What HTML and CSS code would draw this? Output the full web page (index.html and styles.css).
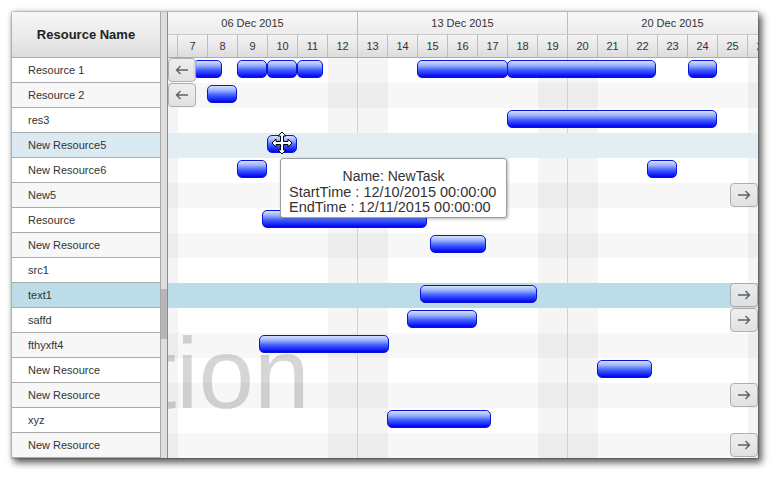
FILE: index.html
```html
<!DOCTYPE html>
<html>
<head>
<meta charset="utf-8">
<link rel="stylesheet" href="styles.css">
</head>
<body>
<div class="window">
  <div class="left">
    <div class="left-head">Resource Name</div>
    <div class="list">
      <div class="lrow">Resource 1</div>
      <div class="lrow alt">Resource 2</div>
      <div class="lrow">res3</div>
      <div class="lrow sel">New Resource5</div>
      <div class="lrow">New Resource6</div>
      <div class="lrow alt">New5</div>
      <div class="lrow">Resource</div>
      <div class="lrow alt">New Resource</div>
      <div class="lrow">src1</div>
      <div class="lrow sel2">text1</div>
      <div class="lrow">saffd</div>
      <div class="lrow alt">fthyxft4</div>
      <div class="lrow">New Resource</div>
      <div class="lrow alt">New Resource</div>
      <div class="lrow">xyz</div>
      <div class="lrow alt">New Resource</div>
    </div>
  </div>
  <div class="vscroll"><div class="thumb"></div></div>
  <div class="timeline">
    <div class="tl-head">
      <div class="weeks">
        <div class="week">06 Dec 2015</div>
        <div class="week">13 Dec 2015</div>
        <div class="week">20 Dec 2015</div>
      </div>
      <div class="days">
        <div class="day">6</div><div class="day">7</div><div class="day">8</div><div class="day">9</div><div class="day">10</div><div class="day">11</div><div class="day">12</div>
        <div class="day">13</div><div class="day">14</div><div class="day">15</div><div class="day">16</div><div class="day">17</div><div class="day">18</div><div class="day">19</div>
        <div class="day">20</div><div class="day">21</div><div class="day">22</div><div class="day">23</div><div class="day">24</div><div class="day">25</div><div class="day">26</div>
      </div>
    </div>
    <div class="tl-body">
      <div class="grid">
        <div class="gcol we"></div><div class="gcol"></div><div class="gcol"></div><div class="gcol"></div><div class="gcol"></div><div class="gcol"></div><div class="gcol we wk"></div>
        <div class="gcol we"></div><div class="gcol"></div><div class="gcol"></div><div class="gcol"></div><div class="gcol"></div><div class="gcol"></div><div class="gcol we wk"></div>
        <div class="gcol we"></div><div class="gcol"></div><div class="gcol"></div><div class="gcol"></div><div class="gcol"></div><div class="gcol"></div><div class="gcol we"></div>
      </div>

      <div class="trow">
        <div class="nav l"><svg width="14" height="10" viewBox="0 0 14 10"><path d="M13 5H1.5M5.5 1L1.5 5L5.5 9" fill="none" stroke="#555" stroke-width="1.4"/></svg></div>
        <div class="bar" style="left:25px;width:29px"></div>
        <div class="bar" style="left:69px;width:30px"></div>
        <div class="bar" style="left:99px;width:30px"></div>
        <div class="bar" style="left:129px;width:26px"></div>
        <div class="bar" style="left:249px;width:91px"></div>
        <div class="bar" style="left:339px;width:149px"></div>
        <div class="bar" style="left:520px;width:29px"></div>
      </div>
      <div class="trow alt">
        <div class="nav l"><svg width="14" height="10" viewBox="0 0 14 10"><path d="M13 5H1.5M5.5 1L1.5 5L5.5 9" fill="none" stroke="#555" stroke-width="1.4"/></svg></div>
        <div class="bar" style="left:39px;width:30px"></div>
      </div>
      <div class="trow">
        <div class="bar" style="left:339px;width:210px"></div>
      </div>
      <div class="trow sel">
        <div class="bar" style="left:99px;width:30px"></div>
        <svg class="movecur" width="22" height="24" viewBox="0 0 22 24"><path d="M11 1L15 5H12.5V10.5H17V8L21 12L17 16V13.5H12.5V19H15L11 23L7 19H9.5V13.5H5V16L1 12L5 8V10.5H9.5V5H7Z" fill="#fff" stroke="#000" stroke-width="1" stroke-linejoin="miter"/></svg>
      </div>
      <div class="trow">
        <div class="bar" style="left:69px;width:30px"></div>
        <div class="bar" style="left:479px;width:30px"></div>
      </div>
      <div class="trow alt">
        <div class="nav r"><svg width="14" height="10" viewBox="0 0 14 10"><path d="M1 5H12.5M8.5 1L12.5 5L8.5 9" fill="none" stroke="#555" stroke-width="1.4"/></svg></div>
      </div>
      <div class="trow">
        <div class="bar" style="left:94px;width:165px"></div>
      </div>
      <div class="trow alt">
        <div class="bar" style="left:262px;width:56px"></div>
      </div>
      <div class="trow"></div>
      <div class="trow sel2">
        <div class="bar" style="left:252px;width:117px"></div>
        <div class="nav r"><svg width="14" height="10" viewBox="0 0 14 10"><path d="M1 5H12.5M8.5 1L12.5 5L8.5 9" fill="none" stroke="#555" stroke-width="1.4"/></svg></div>
      </div>
      <div class="trow">
        <div class="bar" style="left:239px;width:70px"></div>
        <div class="nav r"><svg width="14" height="10" viewBox="0 0 14 10"><path d="M1 5H12.5M8.5 1L12.5 5L8.5 9" fill="none" stroke="#555" stroke-width="1.4"/></svg></div>
      </div>
      <div class="trow alt">
        <div class="bar" style="left:91px;width:130px"></div>
      </div>
      <div class="trow">
        <div class="bar" style="left:429px;width:55px"></div>
      </div>
      <div class="trow alt">
        <div class="nav r"><svg width="14" height="10" viewBox="0 0 14 10"><path d="M1 5H12.5M8.5 1L12.5 5L8.5 9" fill="none" stroke="#555" stroke-width="1.4"/></svg></div>
      </div>
      <div class="trow">
        <div class="bar" style="left:219px;width:104px"></div>
      </div>
      <div class="trow alt">
        <div class="nav r"><svg width="14" height="10" viewBox="0 0 14 10"><path d="M1 5H12.5M8.5 1L12.5 5L8.5 9" fill="none" stroke="#555" stroke-width="1.4"/></svg></div>
      </div>

      <div class="watermark">tion</div>

      <div class="tooltip">
        <div class="tt-title">Name: NewTask</div>
        <div class="tt-line">StartTime : 12/10/2015 00:00:00</div>
        <div class="tt-line">EndTime : 12/11/2015 00:00:00</div>
      </div>
    </div>
  </div>
</div>
</body>
</html>
```
FILE: styles.css
```css
* { box-sizing: border-box; }

body {
  margin: 0;
  padding: 12px;
  background: #fff;
  font-family: "Liberation Sans", Arial, sans-serif;
  color: #333;
}

.window {
  display: flex;
  width: 746px;
  height: 446px;
  background: #fff;
  overflow: hidden;
  box-shadow: 0 0 0 1px rgba(0,0,0,0.12), 3px 4px 7px 1px rgba(0,0,0,0.6), 0 0 5px rgba(0,0,0,0.2);
}

/* left resource grid */
.left {
  width: 148px;
  flex: none;
  display: flex;
  flex-direction: column;
}

.left-head {
  height: 46px;
  flex: none;
  border-bottom: 1px solid #aaa;
  background: linear-gradient(#f7f7f7, #e9e9e9 60%, #dcdcdc);
  display: flex;
  align-items: center;
  justify-content: center;
  font-weight: bold;
  font-size: 13px;
  color: #222;
}

.lrow {
  height: 25px;
  border-bottom: 1px solid #ababab;
  padding-left: 16px;
  font-size: 11px;
  display: flex;
  align-items: center;
  background: #fff;
  color: #333;
}
.lrow.alt { background: #f7f7f7; }
.lrow.sel { background: #dbeaf2; }
.lrow.sel2 { background: #bcdde8; }

/* vertical scrollbar */
.vscroll {
  width: 8px;
  flex: none;
  border-left: 1px solid #a6a6a6;
  border-right: 1px solid #8c8c8c;
  background: #dedede;
  position: relative;
}
.thumb {
  position: absolute;
  left: 0;
  right: 0;
  top: 277px;
  height: 50px;
  background: #b6b6b6;
}

/* timeline */
.timeline {
  flex: 1;
  min-width: 0;
  display: flex;
  flex-direction: column;
  overflow: hidden;
}

.tl-head {
  height: 46px;
  flex: none;
  overflow: hidden;
  border-bottom: 1px solid #adadad;
}

.weeks {
  display: flex;
  height: 23px;
  margin-left: -20px;
  border-bottom: 1px solid #c8c8c8;
  background: linear-gradient(#f8f8f8, #ececec);
}
.week {
  flex: none;
  width: 210px;
  border-right: 1px solid #bcbcbc;
  font-size: 11px;
  display: flex;
  align-items: center;
  justify-content: center;
  color: #333;
}

.days {
  display: flex;
  height: 22px;
  margin-left: -20px;
  background: linear-gradient(#f3f3f3, #e6e6e6 60%, #dcdcdc);
}
.day {
  flex: none;
  width: 30px;
  border-right: 1px solid #bcbcbc;
  font-size: 11px;
  display: flex;
  align-items: center;
  justify-content: center;
  color: #333;
}

.tl-body {
  position: relative;
  z-index: 0;
  flex: 1;
  overflow: hidden;
}

.grid {
  position: absolute;
  top: 0;
  bottom: 0;
  left: -20px;
  display: flex;
  z-index: 1;
  pointer-events: none;
}
.gcol { flex: none; width: 30px; }
.gcol.we { background: rgba(0,0,0,0.04); }
.gcol.wk { border-right: 1px solid #d2d2d2; }

.trow {
  height: 25px;
  position: relative;
  background: #fff;
}
.trow.alt { background: #f7f7f7; }
.trow.sel { background: #e3eef3; z-index: 2; }
.trow.sel2 { background: #bcdde8; z-index: 2; }

.bar {
  position: absolute;
  top: 2px;
  height: 18px;
  border: 1px solid #0814d8;
  border-radius: 5px;
  background: linear-gradient(#d6e0fc 0%, #9ab0fb 28%, #3e5cff 58%, #0000f4 100%);
  z-index: 3;
}

.movecur {
  position: absolute;
  left: 103px;
  top: -2px;
  z-index: 4;
}

.nav {
  position: absolute;
  top: 0;
  width: 28px;
  height: 24px;
  border: 1px solid #a9a9a9;
  border-radius: 4px;
  background: linear-gradient(#eeeeee, #e0e0e0);
  display: flex;
  align-items: center;
  justify-content: center;
  z-index: 4;
  opacity: 0.92;
}
.nav.l { left: 0; }
.nav.r { right: 0; }

.watermark {
  position: absolute;
  left: -19.5px;
  top: 265px;
  font-family: "Liberation Sans", Arial, sans-serif;
  font-size: 100px;
  line-height: 100px;
  color: rgba(0,0,0,0.16);
  z-index: 2;
  pointer-events: none;
  white-space: nowrap;
}

.tooltip {
  position: absolute;
  left: 112px;
  top: 100px;
  width: 227px;
  height: 60px;
  padding: 10px 8px 2px 8px;
  background: #fff;
  border: 1px solid #9c9c9c;
  border-radius: 3px;
  box-shadow: 1px 1px 3px rgba(0,0,0,0.3);
  font-size: 14.5px;
  line-height: 15.5px;
  color: #333;
  z-index: 10;
  white-space: nowrap;
}
.tt-title { text-align: center; font-size: 14px; }
```
